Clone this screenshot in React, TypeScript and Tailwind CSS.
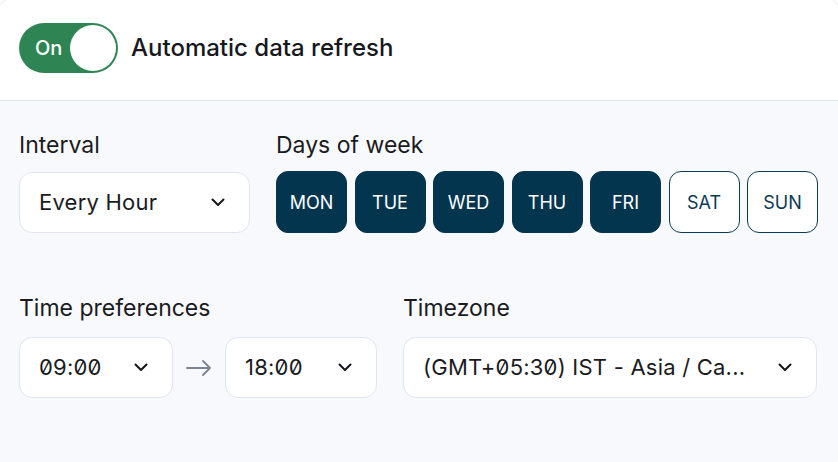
import React, { useState } from 'react';

const DAYS = ['MON', 'TUE', 'WED', 'THU', 'FRI', 'SAT', 'SUN'];

const Chevron = () => (
  <svg width="14" height="9" viewBox="0 0 14 9" fill="none" className="shrink-0">
    <path d="M1.5 1.5 7 7l5.5-5.5" stroke="#16171c" strokeWidth="2" strokeLinecap="round" strokeLinejoin="round" />
  </svg>
);

const SelectBox = ({ value, className = '' }: { value: string; className?: string }) => (
  <button
    className={`flex items-center justify-between gap-6 h-[61px] pl-[19px] pr-[24px] bg-white border border-[#e1e4f3] rounded-[13px] text-[22px] tracking-[0.01em] text-[#1a1b21] slashed-zero ${className}`}
  >
    <span className="whitespace-nowrap text-left">{value}</span>
    <Chevron />
  </button>
);

const App: React.FC = () => {
  const [enabled, setEnabled] = useState(true);
  const [days, setDays] = useState<string[]>(['MON', 'TUE', 'WED', 'THU', 'FRI']);

  const toggleDay = (d: string) => {
    setDays(prev => (prev.includes(d) ? prev.filter(x => x !== d) : [...prev, d]));
  };

  return (
    <div className="h-[462px] w-[838px] overflow-hidden bg-white font-['Inter',sans-serif]">
      <div className="-ml-[5px] -mt-[5px] w-[848px] h-[480px] rounded-[24px] border border-[#e1e4f3] overflow-hidden bg-[#f8f9fc]">
        {/* Header */}
        <div className="flex items-center gap-[13px] bg-white pl-[23px] pt-[27px] pb-[27px] border-b border-[#e1e4f3]">
          <button
            onClick={() => setEnabled(!enabled)}
            className="flex items-center justify-between w-[99px] h-[50px] rounded-full bg-[#2e8553] pl-[16px] pr-[2px]"
          >
            <span className="text-white text-[20px] font-medium">{enabled ? 'On' : 'Off'}</span>
            <span className="w-[46px] h-[46px] rounded-full bg-white" />
          </button>
          <span className="text-[24px] font-medium text-[#17181d]">Automatic data refresh</span>
        </div>

        {/* Body */}
        <div className="pl-[23px] pr-[26px] pt-[30px]">
          <div className="flex gap-[26px]">
            <div className="flex flex-col gap-[13px]">
              <label className="text-[23px] leading-[28px] text-[#1a1b21]">Interval</label>
              <SelectBox value="Every Hour" className="w-[231px]" />
            </div>
            <div className="flex flex-col gap-[12px]">
              <label className="text-[23px] leading-[28px] text-[#1a1b21]">Days of week</label>
              <div className="flex gap-[7.5px]">
                {DAYS.map(d => {
                  const active = days.includes(d);
                  return (
                    <button
                      key={d}
                      onClick={() => toggleDay(d)}
                      className={`w-[71px] h-[62px] rounded-[12px] text-[18px] border ${
                        active
                          ? 'bg-[#03354f] border-[#03354f] text-white'
                          : 'bg-white border-[#0b3a55] text-[#0b3a55]'
                      }`}
                    >
                      {d}
                    </button>
                  );
                })}
              </div>
            </div>
          </div>

          <div className="flex gap-[26px] mt-[61px]">
            <div className="flex flex-col gap-[15px]">
              <label className="text-[23px] leading-[28px] text-[#1a1b21]">Time preferences</label>
              <div className="flex items-center gap-[13px]">
                <SelectBox value="09:00" className="w-[154px]" />
                <svg width="26" height="16" viewBox="0 0 26 16" fill="none">
                  <path d="M1 8h23M17 1l7 7-7 7" stroke="#7c8394" strokeWidth="1.8" strokeLinecap="round" strokeLinejoin="round" />
                </svg>
                <SelectBox value="18:00" className="w-[152px]" />
              </div>
            </div>
            <div className="flex flex-col gap-[15px]">
              <label className="text-[23px] leading-[28px] text-[#1a1b21]">Timezone</label>
              <SelectBox value="(GMT+05:30) IST - Asia / Ca..." className="w-[414px]" />
            </div>
          </div>
        </div>
      </div>
    </div>
  );
};

export default App;
